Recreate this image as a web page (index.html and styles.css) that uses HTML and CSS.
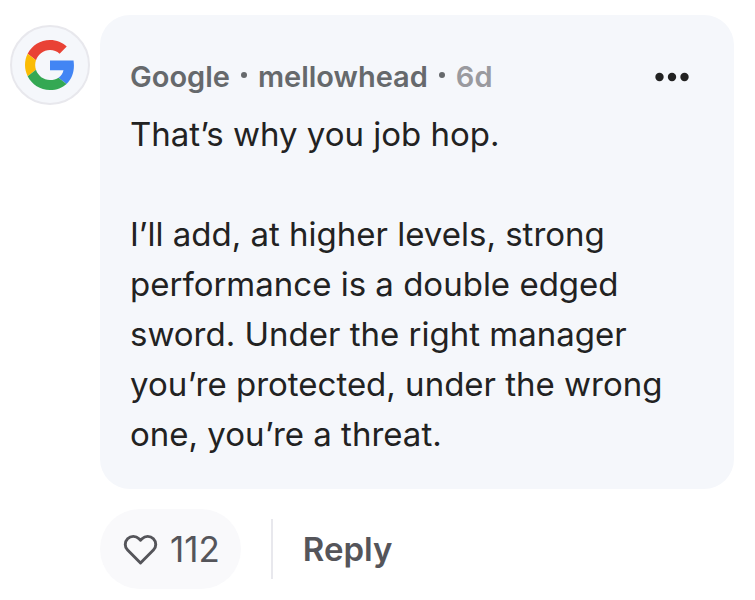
FILE: index.html
```html
<!DOCTYPE html>
<html lang="en">
<head>
<meta charset="utf-8">
<title>Comment</title>
<link rel="stylesheet" href="styles.css">
</head>
<body>
<article class="comment">
  <a class="avatar" href="#" aria-label="Google">
    <svg viewBox="0 0 48 48" aria-hidden="true">
      <path fill="#E94235" d="M24 9.5c3.54 0 6.71 1.22 9.21 3.6l6.85-6.85C35.9 2.38 30.47 0 24 0 14.62 0 6.51 5.38 2.56 13.22l7.98 6.19C12.43 13.72 17.74 9.5 24 9.5z"/>
      <path fill="#4285F4" d="M46.98 24.55c0-1.57-.15-3.09-.38-4.95H24v9.42h12.94c-.58 2.96-2.26 5.48-4.78 7.18l7.73 6c4.51-4.18 7.09-10.36 7.09-17.65z"/>
      <path fill="#FBBC05" d="M10.53 28.59c-.48-1.45-.76-2.99-.76-4.59s.27-3.14.76-4.59l-7.98-6.19C.92 16.46 0 20.12 0 24c0 3.88.92 7.54 2.56 10.78l7.97-6.19z"/>
      <path fill="#34A853" d="M24 48c6.48 0 11.93-2.13 15.89-5.81l-7.73-6c-2.15 1.45-4.92 2.3-8.16 2.3-6.26 0-11.57-4.22-13.47-9.91l-7.98 6.19C6.51 42.62 14.62 48 24 48z"/>
    </svg>
  </a>
  <div class="main">
    <div class="bubble">
      <header class="head">
        <a class="name" href="#">Google</a>
        <span class="dot"></span>
        <a class="name" href="#">mellowhead</a>
        <span class="dot"></span>
        <time class="time">6d</time>
        <button class="more" type="button" aria-label="More options">
          <svg viewBox="0 0 34 10" aria-hidden="true"><circle cx="4.5" cy="5" r="4.2"/><circle cx="17" cy="5" r="4.2"/><circle cx="29.5" cy="5" r="4.2"/></svg>
        </button>
      </header>
      <p class="text">That’s why you job hop.</p>
      <p class="text">I’ll add, at higher levels, strong performance is a double edged sword. Under the right manager you’re protected, under the wrong one, you’re a threat.</p>
    </div>
    <footer class="actions">
      <button class="like" type="button" aria-label="Like, 112">
        <svg viewBox="0 0 24 24" aria-hidden="true"><path d="M20.84 4.61a5.5 5.5 0 0 0-7.78 0L12 5.67l-1.06-1.06a5.5 5.5 0 0 0-7.78 7.78L12 21.23l8.84-8.84a5.5 5.5 0 0 0 0-7.78z"/></svg>
        <span>112</span>
      </button>
      <button class="reply" type="button">Reply</button>
    </footer>
  </div>
</article>
</body>
</html>
```
FILE: styles.css
```css
* { box-sizing: border-box; }
body { margin: 0; background: #fff; color: #222; font-family: Inter, "Liberation Sans", sans-serif; }
button { border: 0; padding: 0; background: none; font: inherit; color: inherit; cursor: pointer; }
a { color: inherit; text-decoration: none; }
.comment { display: flex; gap: 10px; padding: 15px 21px 10px 10px; }
.avatar { flex: none; display: flex; align-items: center; justify-content: center; width: 80px; height: 80px; margin-top: 10px; border: 2px solid #e8e8ed; border-radius: 50%; background: #f5f7fb; }
.avatar svg { width: 50px; height: 50px; }
.main { flex: 1; min-width: 0; }
.bubble { padding: 42px 45px 30px 30px; border-radius: 30px; background: #f5f7fb; }
.head { display: flex; align-items: center; height: 40px; margin-bottom: 12px; font-size: 29px; line-height: 40px; font-weight: 600; color: #66696c; }
.dot { width: 6px; height: 6px; margin: 0 11px 4px; border-radius: 50%; background: currentColor; }
.time { color: #9a9a9f; }
.more { display: flex; margin-left: auto; color: #222; }
.more svg { width: 34px; height: 10px; fill: currentColor; }
.text { margin: 0; font-size: 33px; line-height: 50px; }
.text + .text { margin-top: 50px; }
.actions { display: flex; align-items: center; margin-top: 20px; color: #55555a; }
.like { display: flex; align-items: center; gap: 12px; height: 80px; padding: 0 21px 0 23px; border-radius: 40px; background: #f9f9fb; font-size: 35px; }
.like svg { width: 35px; height: 35px; fill: none; stroke: currentColor; stroke-width: 2; stroke-linejoin: round; }
.reply { height: 60px; margin-left: 30px; padding-left: 30px; border-left: 2px solid #e8e8ed; font-size: 33px; font-weight: 600; }
```
